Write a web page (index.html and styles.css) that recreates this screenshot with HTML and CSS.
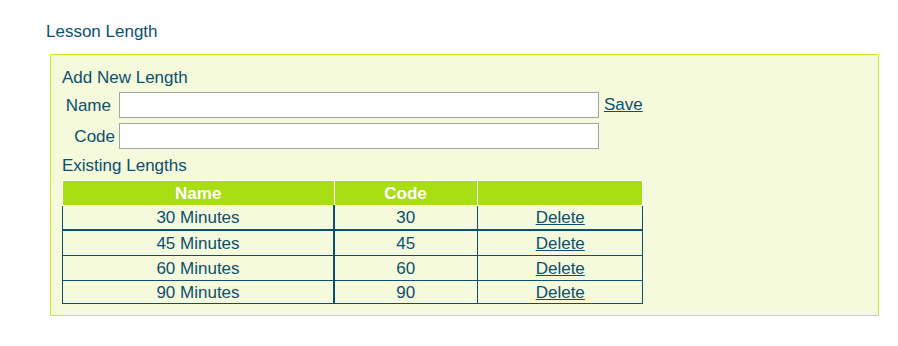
FILE: index.html
```html
<!DOCTYPE html>
<html>
<head>
<meta charset="utf-8">
<link rel="stylesheet" href="styles.css">
</head>
<body>
<div class="page-title">Lesson Length</div>
<div class="panel">
  <div class="section-title">Add New Length</div>
  <div class="form-grid">
    <label class="lbl lbl-name">Name</label>
    <input class="field" type="text">
    <a class="link" href="#">Save</a>
    <label class="lbl">Code</label>
    <input class="field" type="text">
    <span></span>
  </div>
  <div class="section-title existing">Existing Lengths</div>
  <table class="grid">
    <thead>
      <tr><th class="c-name">Name</th><th class="c-code">Code</th><th class="c-act"></th></tr>
    </thead>
    <tbody>
      <tr class="first"><td class="c-name">30 Minutes</td><td>30</td><td><a class="link" href="#">Delete</a></td></tr>
      <tr><td class="c-name">45 Minutes</td><td>45</td><td><a class="link" href="#">Delete</a></td></tr>
      <tr><td class="c-name">60 Minutes</td><td>60</td><td><a class="link" href="#">Delete</a></td></tr>
      <tr class="last"><td class="c-name">90 Minutes</td><td>90</td><td><a class="link" href="#">Delete</a></td></tr>
    </tbody>
  </table>
</div>
</body>
</html>
```
FILE: styles.css
```css
body {
  margin: 0;
  font-family: "Liberation Sans", Arial, sans-serif;
  font-size: 17px;
  color: #0d4f6e;
  background: #ffffff;
}
.page-title {
  padding: 22px 0 0 46px;
  line-height: 19px;
}
.panel {
  margin: 13px 19px 0 50px;
  border: 1px solid #d3eb1d;
  background: #f4fadb;
  padding: 13px 11px 11px 11px;
}
.section-title {
  line-height: 19px;
}
.form-grid {
  display: grid;
  grid-template-columns: 53px 480px auto;
  column-gap: 4px;
  row-gap: 5px;
  align-items: center;
  margin-top: 5px;
}
.lbl {
  text-align: right;
  line-height: 19px;
}
.lbl-name {
  padding-right: 4px;
}
.field {
  box-sizing: border-box;
  width: 480px;
  height: 26px;
  margin: 0;
  border: 1px solid #a4a4a4;
  background: #ffffff;
  font: inherit;
}
.link {
  color: #0d4f6e;
  text-decoration: underline;
  margin-left: 1px;
}
.existing {
  margin-top: 7px;
}
.grid {
  margin-top: 5px;
  border-collapse: collapse;
  width: 581px;
}
.grid th {
  background: #a9dd14;
  color: #ffffff;
  font-weight: bold;
  border: 1px solid #ffffff;
  height: 24px;
  padding: 0;
  line-height: 19px;
}
.grid td {
  border: 1px solid #0d4f6e;
  text-align: center;
  height: 24px;
  padding: 0;
  line-height: 19px;
}
.grid tr.first td {
  height: 23px;
  border-bottom-width: 2px;
}
.grid tr.last td {
  height: 22px;
}
.grid .c-name {
  width: 270px;
}
.grid .c-code {
  width: 142px;
}
.grid td.c-name {
  border-right-width: 2px;
}
```
